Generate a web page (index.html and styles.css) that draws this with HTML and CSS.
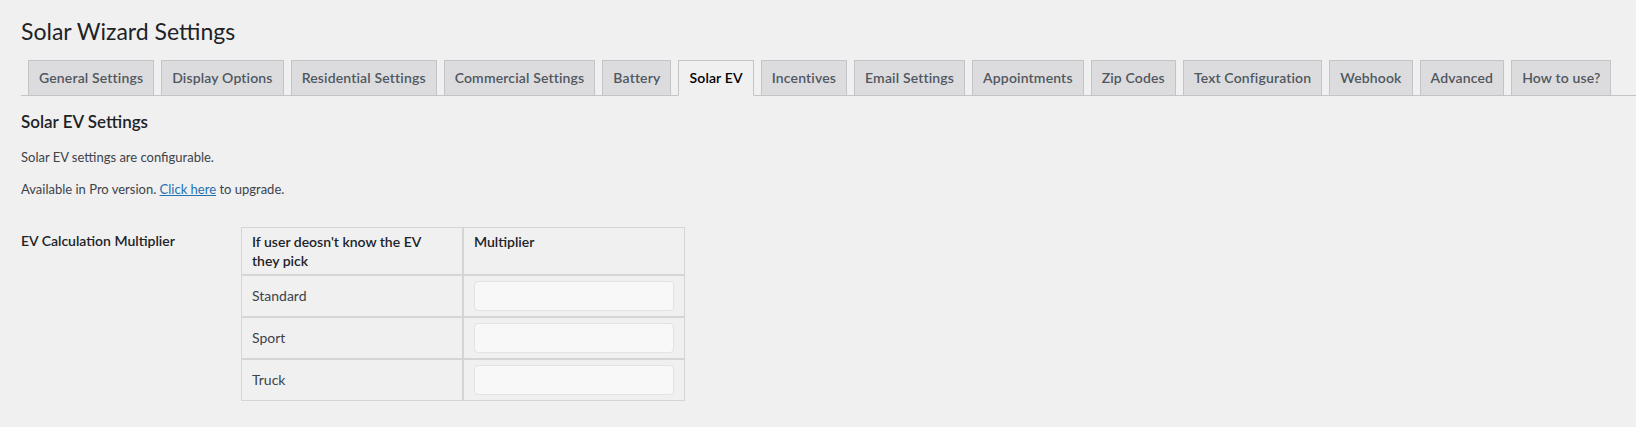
FILE: index.html
```html
<!DOCTYPE html>
<html lang="en">
<head>
<meta charset="utf-8">
<title>Solar Wizard Settings</title>
<link rel="stylesheet" href="styles.css">
</head>
<body>
<div class="wrap">
  <h1 class="page-title">Solar Wizard Settings</h1>
  <nav class="nav-tab-wrapper">
    <a class="nav-tab" href="#">General Settings</a>
    <a class="nav-tab" href="#">Display Options</a>
    <a class="nav-tab" href="#">Residential Settings</a>
    <a class="nav-tab" href="#">Commercial Settings</a>
    <a class="nav-tab" href="#">Battery</a>
    <a class="nav-tab nav-tab-active" href="#">Solar EV</a>
    <a class="nav-tab" href="#">Incentives</a>
    <a class="nav-tab" href="#">Email Settings</a>
    <a class="nav-tab" href="#">Appointments</a>
    <a class="nav-tab" href="#">Zip Codes</a>
    <a class="nav-tab" href="#">Text Configuration</a>
    <a class="nav-tab" href="#">Webhook</a>
    <a class="nav-tab" href="#">Advanced</a>
    <a class="nav-tab" href="#">How to use?</a>
  </nav>
  <div class="content">
    <h2 class="section-title">Solar EV Settings</h2>
    <p class="para">Solar EV settings are configurable.</p>
    <p class="para">Available in Pro version. <a class="link" href="#">Click here</a> to upgrade.</p>
    <table class="form-table">
      <tr>
        <th class="form-label">EV Calculation Multiplier</th>
        <td class="form-field">
          <table class="ev-table">
            <tr>
              <th class="ev-head">If user deosn't know the EV<br>they pick</th>
              <th class="ev-head">Multiplier</th>
            </tr>
            <tr>
              <td class="ev-cell">Standard</td>
              <td class="ev-cell"><input class="ev-input" type="text"></td>
            </tr>
            <tr>
              <td class="ev-cell">Sport</td>
              <td class="ev-cell"><input class="ev-input" type="text"></td>
            </tr>
            <tr>
              <td class="ev-cell">Truck</td>
              <td class="ev-cell"><input class="ev-input" type="text"></td>
            </tr>
          </table>
        </td>
      </tr>
    </table>
  </div>
</div>
</body>
</html>
```
FILE: styles.css
```css
html, body {
  margin: 0;
  padding: 0;
  background: #f0f0f1;
}
body {
  font-family: Lato, "Open Sans", sans-serif;
  font-size: 13px;
  color: #1d2327;
}
.wrap {
  padding: 10px 0 0 21px;
}
.page-title {
  margin: 0;
  padding: 7px 0 4px;
  font-size: 23px;
  line-height: 1.3;
  font-weight: 400;
  color: #1d2327;
}
.nav-tab-wrapper {
  display: flex;
  flex-wrap: nowrap;
  padding-top: 9px;
  border-bottom: 1px solid #c3c4c7;
}
.nav-tab {
  display: block;
  margin-left: 7px;
  margin-bottom: -1px;
  padding: 5px 10px;
  border: 1px solid #c3c4c7;
  background: #dcdcde;
  color: #50575e;
  font-size: 14px;
  line-height: 24px;
  font-weight: 600;
  letter-spacing: 0.15px;
  text-decoration: none;
  white-space: nowrap;
}
.nav-tab-active {
  background: #f0f0f1;
  border-bottom-color: #f0f0f1;
  color: #000;
}
.content {
  padding-top: 1px;
}
.section-title {
  margin: 14px 0 15px;
  font-size: 17px;
  line-height: 22px;
  font-weight: 600;
  color: #1d2327;
}
.para {
  margin: 13px 0;
  font-size: 13px;
  line-height: 19px;
  color: #3c434a;
}
.link {
  color: #2271b1;
  text-decoration: underline;
}
.form-table {
  border-collapse: collapse;
  margin-top: 6px;
}
.form-label {
  width: 200px;
  padding: 20px 10px 20px 0;
  vertical-align: top;
  text-align: left;
  font-size: 14px;
  line-height: 18px;
  font-weight: 600;
  color: #1d2327;
}
.form-field {
  padding: 15px 10px;
  vertical-align: top;
}
.ev-table {
  border-collapse: separate;
  border-spacing: 0;
  border: 0;
}
.ev-head {
  width: 200px;
  padding: 4px 10px;
  border: 1px solid #d5d5d6;
  text-align: left;
  vertical-align: top;
  font-size: 14px;
  line-height: 19px;
  font-weight: 600;
  color: #1d2327;
}
.ev-cell {
  height: 30px;
  padding: 5px 10px;
  border: 1px solid #d5d5d6;
  vertical-align: middle;
  font-size: 14px;
  line-height: 19px;
  color: #3c434a;
}
.ev-input {
  display: block;
  box-sizing: border-box;
  width: 200px;
  height: 30px;
  margin: 0;
  padding: 0 8px;
  border: 1px solid #e3e3e4;
  border-radius: 4px;
  background: #f8f8f8;
  font: inherit;
}
```
